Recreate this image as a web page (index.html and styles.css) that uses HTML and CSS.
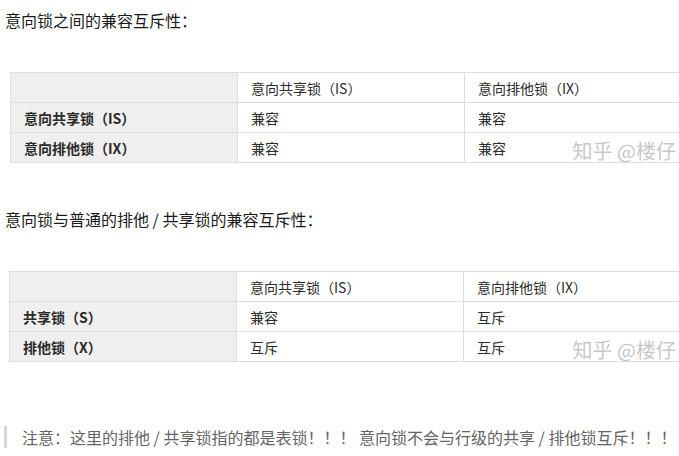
FILE: index.html
```html
<!DOCTYPE html>
<html lang="zh-CN">
<head>
<meta charset="utf-8">
<link rel="stylesheet" href="styles.css">
</head>
<body>
<p class="lead">意向锁之间的兼容互斥性：</p>
<div class="tablewrap">
  <table class="grid">
    <tr><td class="head"></td><td>意向共享锁（IS）</td><td>意向排他锁（IX）</td></tr>
    <tr><td class="head">意向共享锁（IS）</td><td>兼容</td><td>兼容</td></tr>
    <tr><td class="head">意向排他锁（IX）</td><td>兼容</td><td>兼容</td></tr>
  </table>
  <span class="mark">知乎 @楼仔</span>
</div>
<p class="lead second">意向锁与普通的排他 / 共享锁的兼容互斥性：</p>
<div class="tablewrap two">
  <table class="grid">
    <tr><td class="head"></td><td>意向共享锁（IS）</td><td>意向排他锁（IX）</td></tr>
    <tr><td class="head">共享锁（S）</td><td>兼容</td><td>互斥</td></tr>
    <tr><td class="head">排他锁（X）</td><td>互斥</td><td>互斥</td></tr>
  </table>
  <span class="mark">知乎 @楼仔</span>
</div>
<div class="note">注意：这里的排他 / 共享锁指的都是表锁！！！ 意向锁不会与行级的共享 / 排他锁互斥！！！</div>
</body>
</html>
```
FILE: styles.css
```css
html, body {
  margin: 0;
  padding: 0;
  background: #fff;
  overflow: hidden;
}
body {
  width: 679px;
  height: 456px;
  font-family: "Noto Sans CJK SC", "Noto Sans", sans-serif;
  color: #1a1a1a;
}
.lead {
  margin: 8px 0 0 5px;
  font-size: 16px;
  line-height: 24px;
  white-space: nowrap;
}
.lead.second {
  margin-top: 44px;
}
.tablewrap {
  position: relative;
  margin: 40px 0 0 10px;
  width: 669px;
}
.tablewrap.two {
  margin-left: 9px;
  width: 670px;
}
.grid {
  border-collapse: collapse;
  width: 682px;
  table-layout: fixed;
  font-size: 14px;
  color: #2b2b2b;
}
.grid td {
  border: 1px solid #dedede;
  height: 29px;
  padding: 0 0 0 13px;
  white-space: nowrap;
  vertical-align: middle;
}
.grid td.head {
  background: #efefef;
  font-weight: bold;
}
.mark {
  position: absolute;
  right: 3px;
  bottom: -1px;
  font-size: 20px;
  line-height: 26px;
  color: rgba(150, 150, 150, 0.55);
  white-space: nowrap;
}
.note {
  margin: 64px 0 0 4px;
  padding: 0 0 0 15px;
  border-left: 3px solid #d6d6d6;
  font-size: 16px;
  line-height: 22px;
  color: #646464;
  white-space: nowrap;
}
```
